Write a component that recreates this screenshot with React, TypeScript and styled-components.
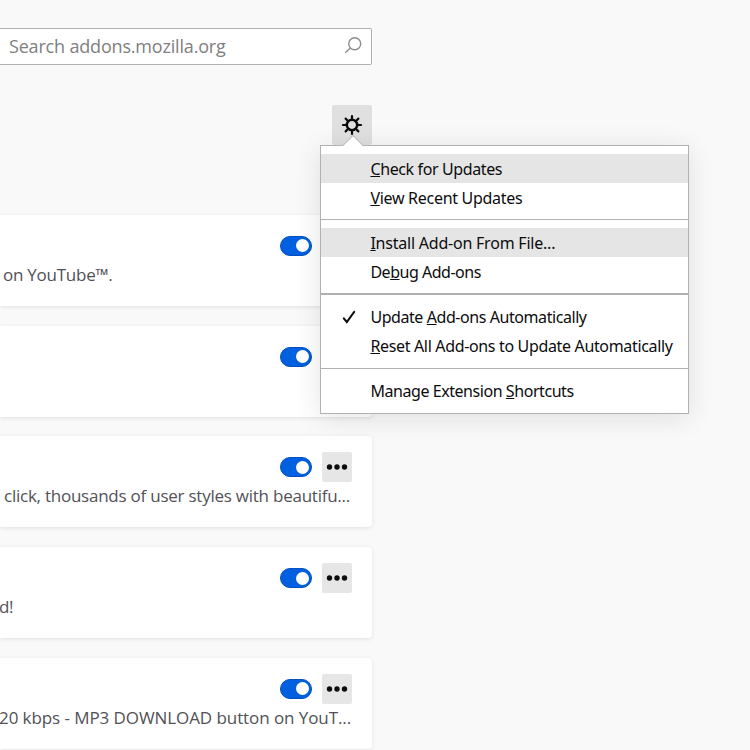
import React from "react";
import styled, { createGlobalStyle } from "styled-components";

const GlobalStyle = createGlobalStyle`
  * { box-sizing: border-box; }
  html, body { margin: 0; background: #f9f9fa; overflow: hidden; }
`;

const Page = styled.main`
  position: relative;
  width: 750px;
  height: 750px;
  overflow: hidden;
  background: #f9f9fa;
  font-family: "Open Sans", "Noto Sans", sans-serif;
`;

const Content = styled.div`
  width: 372px;
  padding-top: 28px;
  display: flex;
  flex-direction: column;
`;

const SearchBox = styled.div`
  height: 37px;
  flex: none;
  display: flex;
  align-items: center;
  justify-content: space-between;
  padding: 0 9px;
  border: 1px solid #b1b1b3;
  border-left: 0;
  border-radius: 0 2px 2px 0;
  background: #fff;
`;

const Line = styled.span<{ $spacing: number }>`
  white-space: pre;
  letter-spacing: ${(p) => p.$spacing}px;
`;

const Placeholder = styled(Line)`
  margin-bottom: 2px;
  font-size: 18px;
  line-height: 26px;
  color: #808080;
`;

const SearchIcon = styled.svg`
  width: 18px;
  height: 18px;
  margin-bottom: 2px;
  flex: none;
`;

const Toolbar = styled.div`
  display: flex;
  justify-content: flex-end;
  margin: 40px 0 69.9px;
`;

const GearButton = styled.button`
  width: 40px;
  height: 40px;
  padding: 0;
  border: 0;
  border-radius: 2px;
  background: #e0e0e1;
  display: grid;
  place-items: center;
`;

const CardList = styled.div`
  display: flex;
  flex-direction: column;
  gap: 19.75px;
`;

const Card = styled.section`
  height: 91px;
  padding: 16px 20px 0 0;
  border-radius: 0 4px 4px 0;
  background: #fff;
  box-shadow: 0 1px 4px rgba(12, 12, 13, 0.1);
`;

const Controls = styled.div`
  height: 30px;
  display: flex;
  align-items: center;
  justify-content: flex-end;
  gap: 10px;
`;

const Toggle = styled.span`
  width: 32px;
  height: 20px;
  padding: 0 2px;
  border: 1px solid #0250bb;
  border-radius: 10px;
  background: #0060df;
  display: flex;
  align-items: center;
  justify-content: flex-end;

  &::after {
    content: "";
    width: 13px;
    height: 13px;
    border-radius: 50%;
    background: #fff;
  }
`;

const MoreButton = styled.button`
  width: 30px;
  height: 30px;
  padding: 0;
  border: 0;
  border-radius: 2px;
  background: #e6e6e6;
  display: grid;
  place-items: center;
`;

const Description = styled(Line)<{ $indent: number }>`
  display: block;
  margin-left: ${(p) => p.$indent}px;
  font-size: 17px;
  line-height: 27px;
  color: #515156;
`;

const Menu = styled.div`
  position: absolute;
  left: 320px;
  top: 145px;
  width: 369px;
  border: 1px solid #b1b1b3;
  background: #fff;
  box-shadow: 0 4px 26px rgba(12, 12, 13, 0.11);
  font-family: "Noto Sans", sans-serif;
`;

const MenuArrow = styled.svg`
  position: absolute;
  left: 21px;
  top: -11px;
  width: 22px;
  height: 11px;
`;

const MenuGroup = styled.div<{ $rule: number }>`
  padding: 8px 0 7px;
  border-bottom: ${(p) => p.$rule}px solid #b1b1b3;
`;

const MenuItem = styled.div<{ $active?: boolean; $inset: number }>`
  height: 29px;
  padding-top: ${(p) => p.$inset}px;
  display: grid;
  grid-template-columns: 49.4px 1fr;
  grid-template-rows: 29px;
  align-items: center;
  background: ${(p) => (p.$active ? "#e5e5e5" : "transparent")};
`;

const Label = styled(Line)`
  grid-column: 2;
  font-size: 16px;
  line-height: 29px;
  color: #0c0c0d;
`;

const Key = styled.span`
  text-decoration: underline;
  text-decoration-thickness: 1px;
  text-underline-offset: 1px;
  text-decoration-skip-ink: none;
`;

const Check = styled.svg`
  grid-row: 1;
  width: 14px;
  height: 14px;
  margin-left: 21px;
  margin-top: -1px;
`;

interface Entry {
  before: string;
  key: string;
  after: string;
  spacing: number;
  active?: boolean;
  checked?: boolean;
}

const groups: { rule: number; inset: number; items: Entry[] }[] = [
  {
    rule: 1,
    inset: 1,
    items: [
      { before: "", key: "C", after: "heck for Updates", spacing: -0.38, active: true },
      { before: "", key: "V", after: "iew Recent Updates", spacing: -0.29 },
    ],
  },
  {
    rule: 2,
    inset: 1,
    items: [
      { before: "", key: "I", after: "nstall Add-on From File...", spacing: -0.22, active: true },
      { before: "De", key: "b", after: "ug Add-ons", spacing: -0.48 },
    ],
  },
  {
    rule: 1,
    inset: 0,
    items: [
      { before: "Update ", key: "A", after: "dd-ons Automatically", spacing: -0.43, checked: true },
      { before: "", key: "R", after: "eset All Add-ons to Update Automatically", spacing: -0.34 },
    ],
  },
  {
    rule: 0,
    inset: 0,
    items: [{ before: "Manage Extension ", key: "S", after: "hortcuts", spacing: -0.44 }],
  },
];

const cards = [
  { text: "on YouTube™.", indent: 3, spacing: -0.25 },
  { text: "", indent: 0, spacing: 0 },
  { text: "click, thousands of user styles with beautifu...", indent: 4, spacing: -0.24 },
  { text: "d!", indent: -1, spacing: -0.5 },
  { text: "20 kbps - MP3 DOWNLOAD button on YouT...", indent: -1, spacing: -0.08 },
];

const rays = [0, 45, 90, 135, 180, 225, 270, 315];

export default function App() {
  return (
    <Page>
      <GlobalStyle />
      <Content>
        <SearchBox>
          <Placeholder $spacing={-0.18}>Search addons.mozilla.org</Placeholder>
          <SearchIcon viewBox="0 0 18 18" fill="none" stroke="#8c8c8d" strokeWidth="1.4">
            <circle cx="10.7" cy="6.7" r="6" />
            <path d="M6.4 11 1.2 15.8" />
          </SearchIcon>
        </SearchBox>
        <Toolbar>
          <GearButton aria-label="Tools">
            <svg width="22" height="22" viewBox="-11 -11 22 22" fill="none" stroke="#0c0c0d" strokeLinecap="round">
              <circle r="5.2" strokeWidth="2.5" />
              {rays.map((a) => (
                <path key={a} d="M0 -6V-9" strokeWidth="2.2" transform={`rotate(${a})`} />
              ))}
            </svg>
          </GearButton>
        </Toolbar>
        <CardList>
          {cards.map((c, i) => (
            <Card key={i}>
              <Controls>
                <Toggle />
                <MoreButton aria-label="More options">
                  <svg width="22" height="6" viewBox="0 0 22 6" fill="#0c0c0d">
                    <circle cx="3.5" cy="3" r="2.7" />
                    <circle cx="11" cy="3" r="2.7" />
                    <circle cx="18.5" cy="3" r="2.7" />
                  </svg>
                </MoreButton>
              </Controls>
              <Description $indent={c.indent} $spacing={c.spacing}>{c.text}</Description>
            </Card>
          ))}
        </CardList>
      </Content>
      <Menu>
        <MenuArrow viewBox="0 0 22 11">
          <path d="M1 11 11 1 21 11Z" fill="#fff" />
          <path d="M0.5 10.5H1L11 0.5 21 10.5h.5" fill="none" stroke="#b1b1b3" />
        </MenuArrow>
        {groups.map((g, i) => (
          <MenuGroup key={i} $rule={g.rule}>
            {g.items.map((m) => (
              <MenuItem key={m.after} $active={m.active} $inset={g.inset}>
                {m.checked && (
                  <Check viewBox="0 0 14 14" fill="none" stroke="#0c0c0d" strokeWidth="2" strokeLinecap="round">
                    <path d="M1.8 8.3 4.8 12 12.2 1.8" />
                  </Check>
                )}
                <Label $spacing={m.spacing}>
                  {m.before}
                  <Key>{m.key}</Key>
                  {m.after}
                </Label>
              </MenuItem>
            ))}
          </MenuGroup>
        ))}
      </Menu>
    </Page>
  );
}
